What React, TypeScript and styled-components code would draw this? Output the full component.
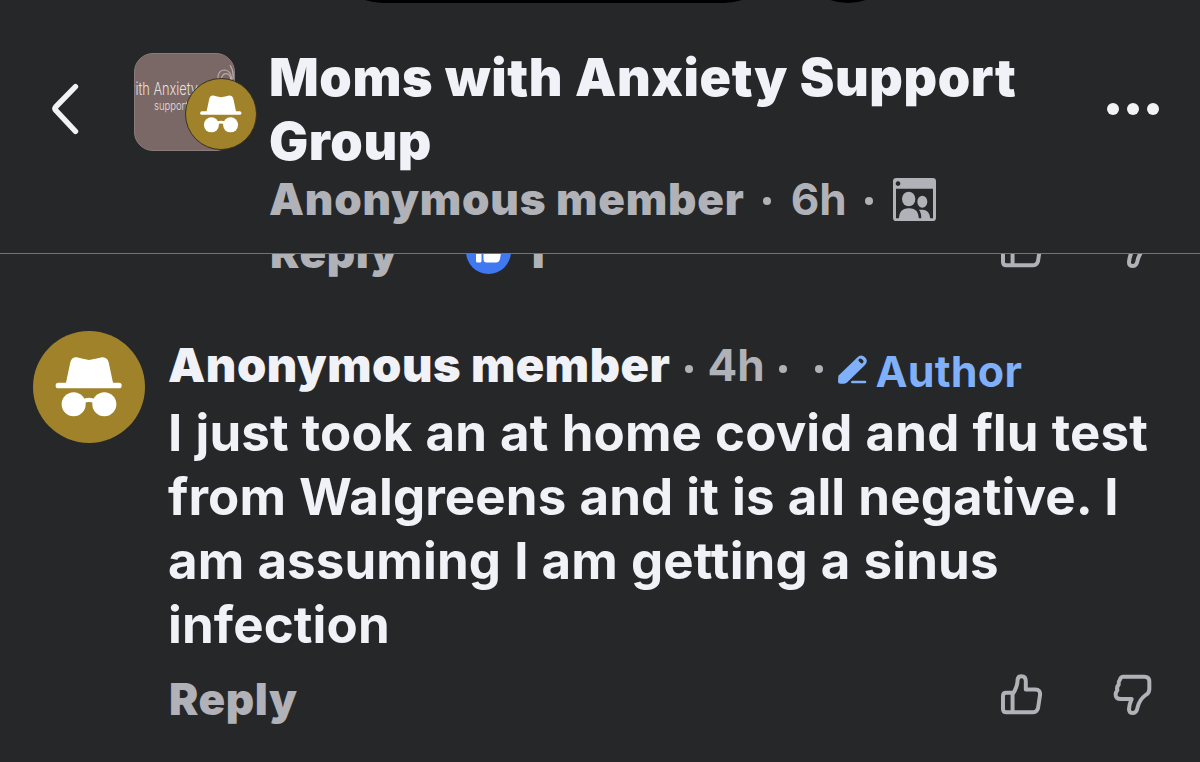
import styled, { createGlobalStyle } from 'styled-components';

const GlobalStyle = createGlobalStyle`
  * {
    box-sizing: border-box;
  }

  body {
    margin: 0;
    background-color: #262729;
    font-family: Inter, 'Liberation Sans', sans-serif;
    overflow: hidden;
  }
`;

const IncognitoIcon = () => (
  <svg viewBox='0 0 336 336' width='100%' height='100%' fill='#fff'>
    <path d='M98 160 L112 94 Q116 78 131 79 Q150 84 168 87 Q188 84 207 79 Q223 79 227 94 L241 160 Z' />
    <rect x='68' y='155' width='198' height='17' rx='8' />
    <circle cx='122' cy='220' r='36' />
    <circle cx='214' cy='220' r='36' />
    <path d='M150 211 Q168 202 186 211' fill='none' stroke='#fff' strokeWidth='13' />
  </svg>
);

const BackIcon = () => (
  <svg width='30' height='54' viewBox='0 0 30 54' fill='none' stroke='#f2f3f6' strokeWidth='5.4' strokeLinecap='round' strokeLinejoin='round'>
    <path d='M24.5 3.6 L4.6 24 Q3.2 25.6 4.6 27.2 L24.5 48.4' />
  </svg>
);

const GroupArt = () => (
  <svg width='101' height='98' viewBox='0 0 101 98' fill='#eadfdf' fontFamily='Inter, sans-serif'>
    <text x='-9' y='42' fontSize='17' fontWeight='300' textLength='73' lengthAdjust='spacingAndGlyphs'>with Anxiety</text>
    <text x='20' y='57' fontSize='12' fontWeight='300' textLength='34' lengthAdjust='spacingAndGlyphs'>support</text>
    <g fill='none' stroke='#b9abab' strokeWidth='1.2'>
      <path d='M84 28 Q83 17 91 17 Q98 18 98 29' />
      <path d='M87 26 Q89 19 94 21 Q98 23 96 30' />
      <path d='M96 12 Q100 18 99 26' />
    </g>
  </svg>
);

const MembersIcon = () => (
  <svg width='43' height='43' viewBox='0 0 129 129' fill='#b0b2b8'>
    <path fillRule='evenodd' d='M10 0 H119 Q129 0 129 10 V119 Q129 129 119 129 H10 Q0 129 0 119 V10 Q0 0 10 0 Z M9 32 V121 H120 V32 Z M15 10 A7 7 0 1 0 15.1 10 Z' />
    <ellipse cx='47' cy='63' rx='20' ry='22' />
    <ellipse cx='88' cy='71' rx='15' ry='18' />
    <path d='M17 123 Q19 91 45 91 H51 Q76 91 78 123 Z' />
    <path d='M78 95 H90 Q110 96 112 123 H85 Q85 104 78 95 Z' />
  </svg>
);

const LikeIcon = () => (
  <svg width='43' height='41' viewBox='0 0 128 124' fill='none' stroke='#b0b2b8' strokeWidth='12' strokeLinejoin='round'>
    <path d='M40 57 H18 Q8 57 8 67 V106 Q8 116 18 116 H97 Q110 116 114 103 L120 64 Q122 47 106 47 H77 V22 Q77 7 64 7 Q52 7 52 20 Q52 36 40 57 Z' />
    <path d='M37 57 V117' />
  </svg>
);

const DislikeIcon = () => (
  <svg width='39' height='42' viewBox='0 0 117 126' fill='none' stroke='#b0b2b8' strokeWidth='12' strokeLinejoin='round'>
    <path d='M31 8 H94 Q109 8 109 23 V46 Q108 58 98 63 Q80 76 74 99 Q71 117 60 117 Q47 117 48 105 Q49 91 56 75 H24 Q7 75 8 62 Q8 54 13 49 Q10 38 17 32 Q16 22 21 17 Q23 8 31 8 Z' />
  </svg>
);

const ReactionIcon = () => (
  <svg width='45' height='45' viewBox='0 0 45 45'>
    <circle cx='22.5' cy='22.5' r='22.5' fill='#3f78f0' />
    <rect x='10' y='16' width='5.5' height='17.5' rx='1.5' fill='#fff' />
    <path d='M17.5 18 L22 9 Q26 8 26 13 V16 H33 Q36 17 35.5 21 L34 30 Q33 33.5 30 33.5 H20.5 Q17.5 33.5 17.5 30 Z' fill='#fff' />
  </svg>
);

const PencilIcon = () => (
  <svg width='29' height='29' viewBox='0 0 87 87' fill='#7fb0f9'>
    <path fillRule='evenodd' d='M1 62 L57 8 Q69 -4 81 7 Q92 18 81 30 L28 82 Q24 86 18 86 H7 Q0 86 0 80 Z M64 11 Q59 15 63 19 L68 24 Q72 27 75 23 Q78 20 75 16 Q69 8 64 11 Z' />
    <rect x='39' y='77' width='46' height='8' rx='4' />
  </svg>
);

interface ActionBarProps {
  count?: number;
}

const ActionBar = ({ count }: ActionBarProps) => (
  <Actions>
    <Reply>Reply</Reply>
    {count !== undefined && (
      <Reactions>
        <ReactionIcon />
        <span>{count}</span>
      </Reactions>
    )}
    <Votes>
      <LikeIcon />
      <DislikeIcon />
    </Votes>
  </Actions>
);

const App = () => {
  return (
    <Screen>
      <GlobalStyle />
      <DeviceEdge>
        <Island />
        <Camera />
      </DeviceEdge>
      <Header>
        <BackButton>
          <BackIcon />
        </BackButton>
        <GroupAvatar>
          <GroupPhoto>
            <GroupArt />
          </GroupPhoto>
          <Badge>
            <IncognitoIcon />
          </Badge>
        </GroupAvatar>
        <HeaderText>
          <Title>Moms with Anxiety Support Group</Title>
          <Subtitle>
            <Member>Anonymous member</Member>
            <Dot $before={18} $after={20} />
            <Time>6h</Time>
            <Dot $before={18} $after={20} />
            <MembersIcon />
          </Subtitle>
        </HeaderText>
        <MoreButton>
          <i />
          <i />
          <i />
        </MoreButton>
      </Header>
      <PreviousComment>
        <ActionBar count={1} />
      </PreviousComment>
      <Comment>
        <Avatar>
          <IncognitoIcon />
        </Avatar>
        <Content>
          <Byline>
            <Author>Anonymous member</Author>
            <Dot $before={15} $after={14} />
            <Time>4h</Time>
            <Dot $before={14} $after={28} />
            <Dot $before={0} $after={15} />
            <AuthorTag>
              <PencilIcon />
              <span>Author</span>
            </AuthorTag>
          </Byline>
          <Message>I just took an at home covid and flu test from Walgreens and it is all negative. I am assuming I am getting a sinus infection</Message>
          <ActionBar />
        </Content>
      </Comment>
    </Screen>
  );
};

const Screen = styled.div`
  width: 1200px;
  height: 762px;
  overflow: hidden;
  color: #f1f2f7;
  background-color: #262729;
`;

const DeviceEdge = styled.div`
  display: flex;
  align-items: flex-end;
  gap: 14px;
  height: 3px;
  padding-left: 328px;
  overflow: hidden;
`;

const Island = styled.div`
  flex-shrink: 0;
  width: 451px;
  height: 110px;
  border-radius: 55px;
  background-color: #000;
`;

const Camera = styled(Island)`
  width: 110px;
`;

const Header = styled.header`
  display: flex;
  align-items: flex-start;
  height: 251px;
  padding: 43px 41px 0 51px;
  border-bottom: 1px solid #727277;
`;

const BackButton = styled.div`
  width: 83px;
  padding-top: 37px;
`;

const GroupAvatar = styled.div`
  position: relative;
  width: 135px;
  padding-top: 7px;
`;

const GroupPhoto = styled.div`
  width: 101px;
  height: 98px;
  border-radius: 19px;
  border: 1px solid #8b7b7b;
  overflow: hidden;
  background-color: #796865;

  svg {
    display: block;
    margin: -1px;
  }
`;

const Badge = styled.div`
  position: absolute;
  left: 51px;
  top: 32px;
  width: 72px;
  height: 72px;
  border: 1px solid #3b3020;
  border-radius: 50%;
  background-color: #a0822b;
`;

const HeaderText = styled.div`
  flex: 1;
`;

const Title = styled.h1`
  width: 780px;
  margin: 0;
  font-size: 52px;
  font-weight: 900;
  letter-spacing: 0.6px;
  word-spacing: 0.8px;
  line-height: 64px;
`;

const Subtitle = styled.div`
  display: flex;
  align-items: center;
  height: 50px;
  color: #b0b2b8;
  font-size: 44px;
  line-height: 50px;
`;

const Member = styled.span`
  font-weight: 900;
  letter-spacing: 0.8px;
`;

const Time = styled.span`
  color: #b0b2b8;
  font-size: 44px;
  font-weight: 700;
`;

const Dot = styled.i<{ $before: number; $after: number }>`
  width: 8px;
  height: 8px;
  margin: 3px ${({ $after }) => $after}px 0 ${({ $before }) => $before}px;
  border-radius: 50%;
  background-color: #b0b2b8;
`;

const MoreButton = styled.div`
  display: flex;
  gap: 8px;
  padding-top: 57px;

  i {
    width: 12px;
    height: 12px;
    border-radius: 50%;
    background-color: #f2f3f6;
  }
`;

const PreviousComment = styled.div`
  height: 77px;
  padding-left: 270px;
  overflow: hidden;

  > div {
    margin-top: -27px;
  }
`;

const Comment = styled.article`
  display: flex;
  padding-left: 33px;
`;

const Avatar = styled.div`
  width: 112px;
  height: 112px;
  margin-right: 24px;
  border-radius: 50%;
  background-color: #a0822b;
`;

const Content = styled.div`
  flex: 1;
  padding-top: 4px;
`;

const Byline = styled.div`
  display: flex;
  align-items: center;
  height: 60px;
  margin-bottom: 6px;
  line-height: 50px;

  > i {
    margin-top: 7px;
  }
`;

const Author = styled.span`
  font-size: 47px;
  font-weight: 900;
  letter-spacing: 0.5px;
  margin-left: -1px;
`;

const AuthorTag = styled.span`
  display: flex;
  align-items: center;
  gap: 9px;
  padding-top: 12px;
  color: #7fb0f9;
  font-size: 43px;
  font-weight: 700;
  letter-spacing: 0.2px;

  svg {
    margin-bottom: 4px;
  }
`;

const Message = styled.p`
  width: 1010px;
  margin: 0 0 17px -1px;
  font-size: 51px;
  font-weight: 700;
  letter-spacing: 0.12px;
  word-spacing: 0.8px;
  line-height: 64px;
`;

const Actions = styled.div`
  display: flex;
  height: 50px;
  padding-right: 48px;
  color: #b0b2b8;
`;

const Reply = styled.span`
  font-size: 44px;
  font-weight: 900;
  letter-spacing: 0.6px;
  line-height: 50px;
`;

const Reactions = styled.div`
  display: flex;
  gap: 14px;
  margin-left: 67px;
  font-size: 44px;
  font-weight: 900;
  line-height: 50px;

  svg {
    margin-top: 2px;
  }
`;

const Votes = styled.div`
  display: flex;
  gap: 70px;
  margin-left: auto;
`;

export default App;
